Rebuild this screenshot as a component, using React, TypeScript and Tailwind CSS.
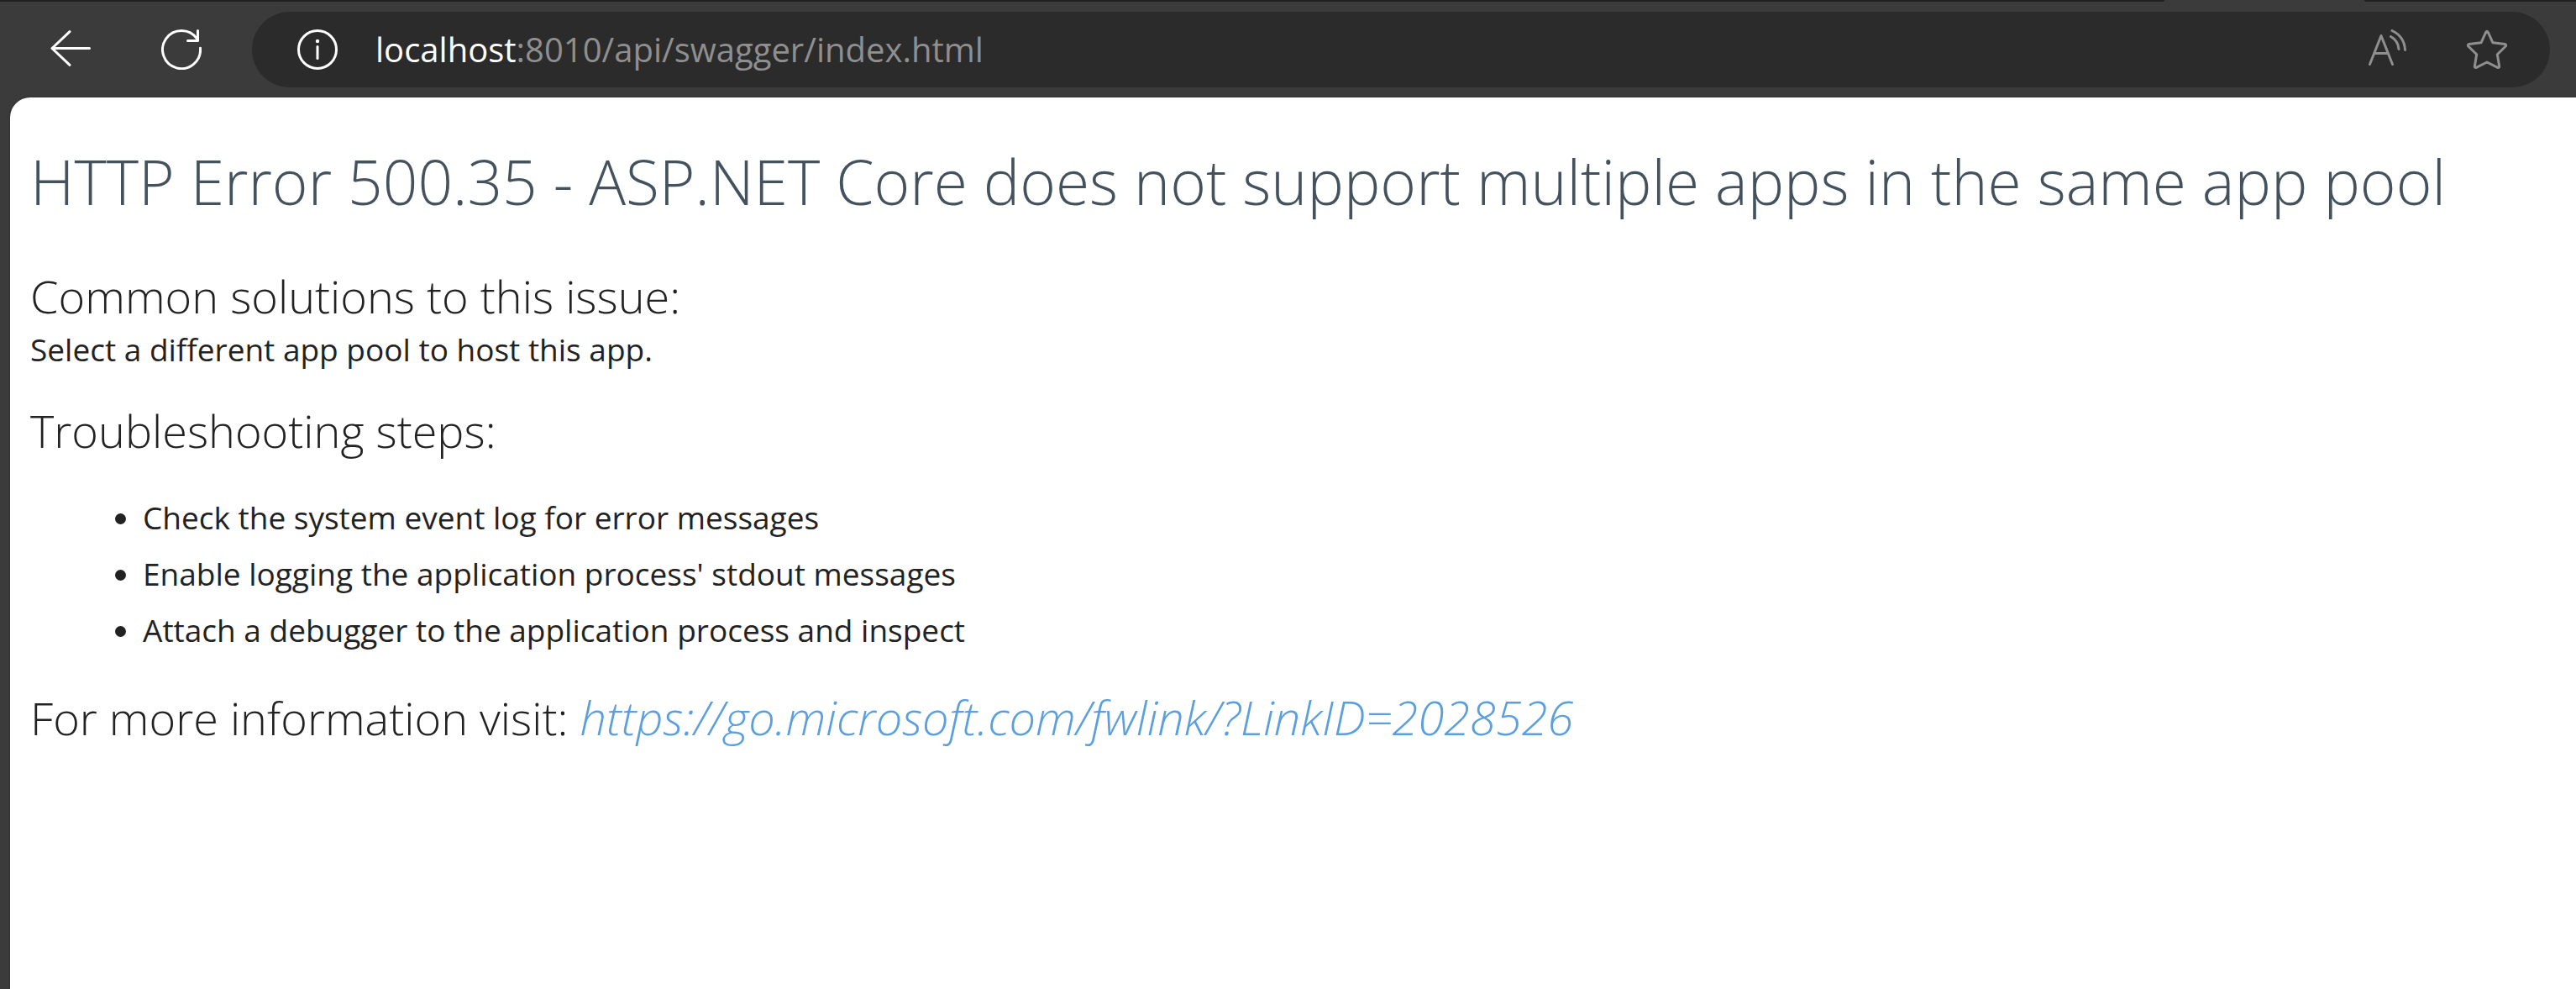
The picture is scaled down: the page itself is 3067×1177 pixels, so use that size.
import React from 'react';

const STEPS = [
  'Check the system event log for error messages',
  "Enable logging the application process' stdout messages",
  'Attach a debugger to the application process and inspect',
];

const HELP_URL = 'https://go.microsoft.com/fwlink/?LinkID=2028526';

const iconProps = {
  width: 48,
  height: 48,
  viewBox: '0 0 48 48',
  fill: 'none',
  stroke: 'currentColor',
  strokeWidth: 3,
  strokeLinecap: 'round' as const,
  strokeLinejoin: 'round' as const,
  'aria-hidden': true,
};

const BackIcon = () => (
  <svg {...iconProps}>
    <path d="M46.5 22.5H2M23 2.7L2 22.5L23 42.3" />
  </svg>
);

const ReloadIcon = () => (
  <svg {...iconProps}>
    <path d="M46.5 22.2A22.5 22.5 0 1 1 42.5 11.2M43.5 1.5V13.5H31.5" />
  </svg>
);

const InfoIcon = () => (
  <svg {...iconProps}>
    <circle cx="24" cy="24" r="22.5" />
    <path d="M24 20.5V34.5" />
    <circle cx="24" cy="14" r="2.2" fill="currentColor" stroke="none" />
  </svg>
);

const ReadAloudIcon = () => (
  <svg {...iconProps}>
    <path d="M1.5 41.5L15 7.5L28.5 41.5M6.5 28.5H23.5" />
    <path d="M26.5 8.5C32 11.5 35.5 16.5 36 23.5M28 1.5C37.5 6 43 13.5 43.5 24.5" />
  </svg>
);

const StarIcon = () => (
  <svg {...iconProps}>
    <path d="M22.8 3.2Q24 1.2 25.2 3.2L31 15.8L45.2 17.5Q47.8 18.3 46 20.3L36.3 29.8L38.7 44Q38.7 46 36.7 45.4L24 39L11.3 45.4Q9.3 46 9.3 44L11.7 29.8L2 20.3Q.2 18.3 2.8 17.5L17 15.8Z" />
  </svg>
);

const Toolbar: React.FC = () => (
  <header>
    {/* Bottom edge of the tab strip, open under the active tab */}
    <div className="flex h-0.5">
      <div className="flex-1 rounded-br-full bg-[#1f1f1f]" />
      <div className="w-[238px]" />
      <div className="w-[252px] rounded-bl-full bg-[#1f1f1f]" />
    </div>

    <div className="flex items-center pt-3 pr-[31px] pb-3 pl-[60px]">
      <button type="button" aria-label="Back" className="text-white">
        <BackIcon />
      </button>
      <button type="button" aria-label="Reload" className="ml-[84px] text-white">
        <ReloadIcon />
      </button>
      <div className="ml-[60px] flex h-[90px] flex-1 items-center rounded-full bg-[#2b2b2b] pr-[51px] pl-[54px]">
        <button type="button" aria-label="Site information" className="text-white">
          <InfoIcon />
        </button>
        <div className="ml-[45px] flex-1 text-[40px] leading-[60px] text-[#8f8f8f]">
          <span className="text-white">localhost</span>:8010/api/swagger/index.html
        </div>
        <div className="flex gap-[69px] text-[#8f8f8f]">
          <button type="button" aria-label="Read aloud">
            <ReadAloudIcon />
          </button>
          <button type="button" aria-label="Add to favorites">
            <StarIcon />
          </button>
        </div>
      </div>
    </div>
  </header>
);

const App: React.FC = () => {
  return (
    <div className="flex min-h-screen flex-col bg-[#3b3b3b] font-['Open_Sans','Noto_Sans',sans-serif]">
      <Toolbar />

      <main className="ml-3 flex-1 rounded-tl-3xl bg-white px-6 pt-[46px] text-[37px] leading-[48px] text-[#222222] shadow-[0_0_3px_rgba(0,0,0,0.3)]">
        <h1 className="text-[73px] leading-[108px] font-light text-[#44525e]">
          HTTP Error 500.35 - ASP.NET Core does not support multiple apps in the same app pool
        </h1>

        <h2 className="mt-[46px] mb-1 text-[54px] leading-[72px] font-light">Common solutions to this issue:</h2>
        <p>Select a different app pool to host this app.</p>

        <h2 className="mt-9 text-[54px] leading-[72px] font-light">Troubleshooting steps:</h2>
        <ul className="mt-[34px] list-disc pl-[134px] leading-[67px]">
          {STEPS.map((step) => (
            <li key={step}>{step}</li>
          ))}
        </ul>

        <h2 className="mt-[34px] text-[54px] leading-[72px] font-light">
          For more information visit:{' '}
          <a href={HELP_URL} className="text-[56px] text-[#5a9fdf] italic">
            {HELP_URL}
          </a>
        </h2>
      </main>
    </div>
  );
};

export default App;
